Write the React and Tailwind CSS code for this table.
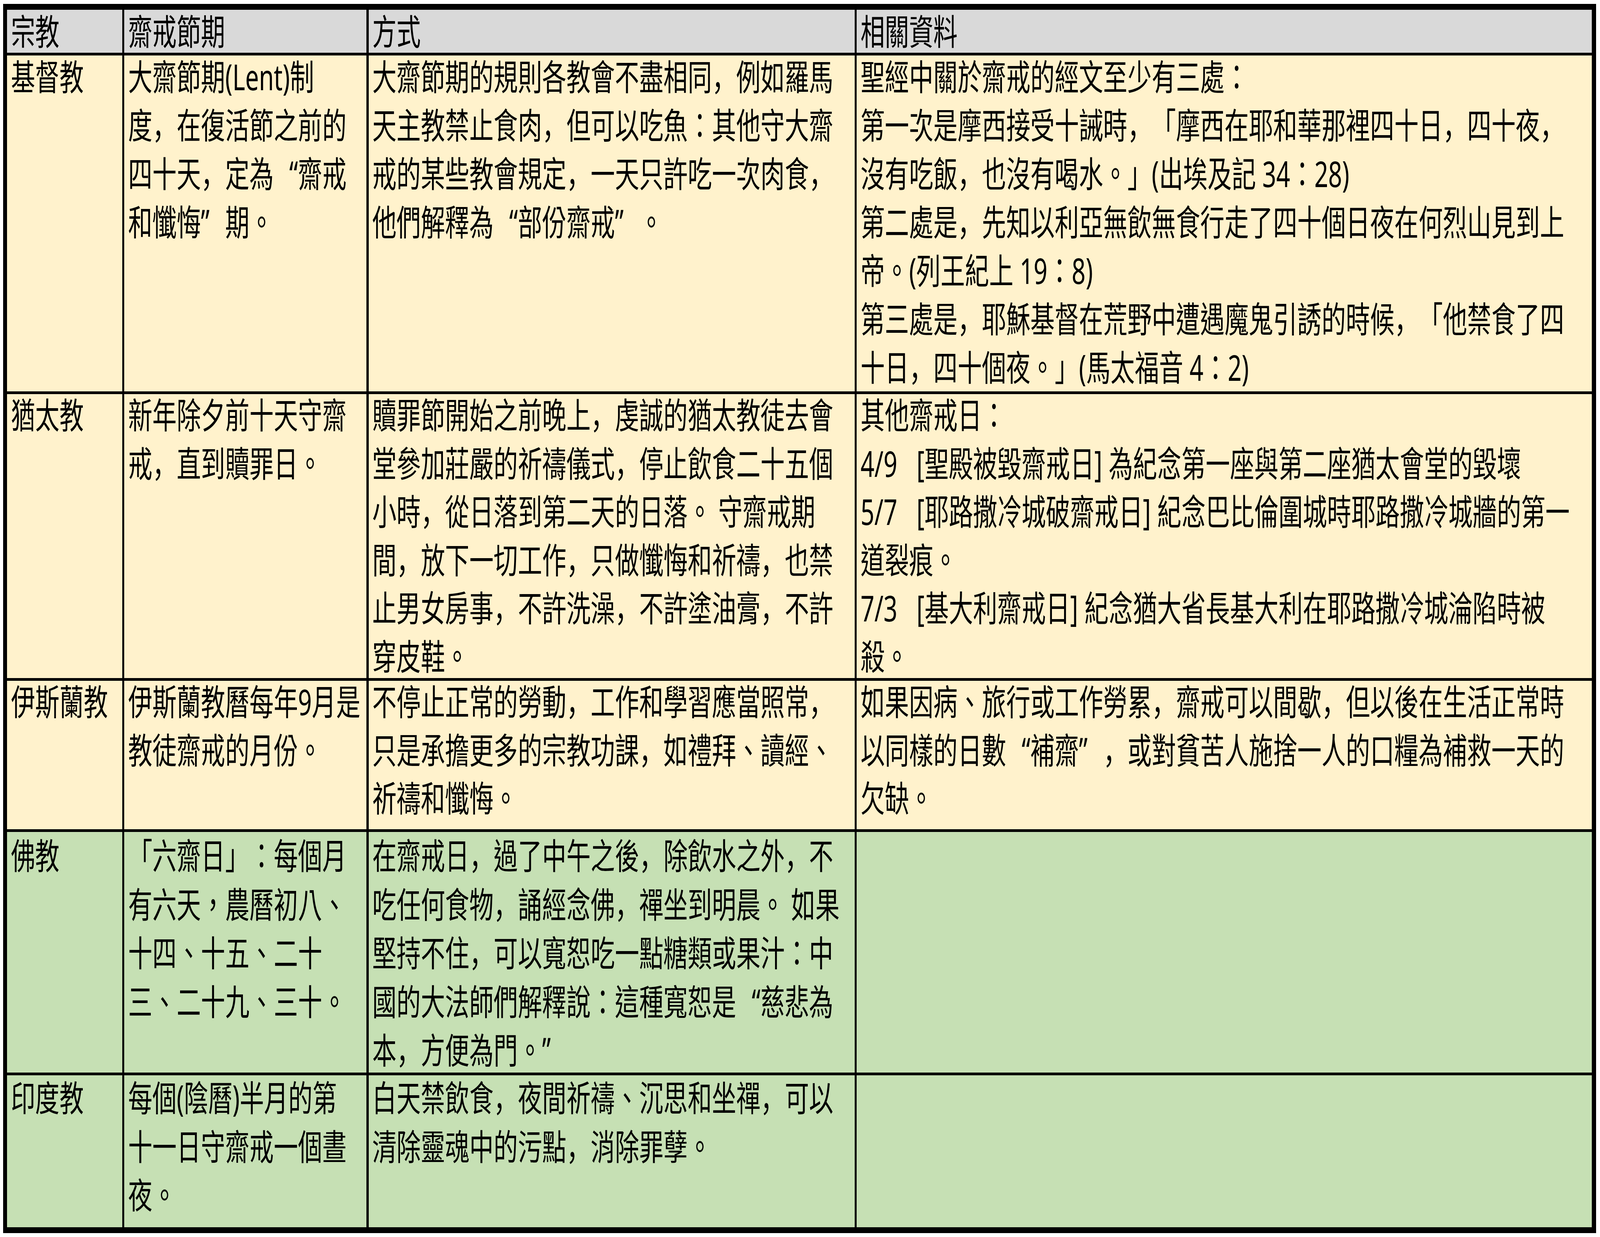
import React from "react";

const LQ = () => <span className="inline-block w-[91px] text-right">“</span>;
const RQ = () => <span className="inline-block w-[91px] text-left">”</span>;
const SC = ({ c }) => <span className="font-['Noto_Sans_CJK_SC',sans-serif] leading-none">{c}</span>;

function renderLine(s) {
  if (typeof s !== "string") return s;
  const parts = s.split(/(“|”|，)/);
  return parts.map((p, i) => {
    if (p === "“") return <LQ key={i} />;
    if (p === "”") return <RQ key={i} />;
    if (p === "，") return <SC key={i} c="，" />;
    return <React.Fragment key={i}>{p}</React.Fragment>;
  });
}

function Line({ children }) {
  return <div className="whitespace-pre origin-left scale-x-[0.68255]">{children}</div>;
}

function Lines({ lines }) {
  return (
    <div className="-mt-[8px]">
      {lines.map((l, i) => {
        if (l && typeof l === "object" && l.d) {
          return (
            <Line key={i}>
              <span className="inline-block w-[210px]">{l.d}</span>
              {renderLine(l.t)}
            </Line>
          );
        }
        return <Line key={i}>{renderLine(l)}</Line>;
      })}
    </div>
  );
}

const rows = [
  {
    cls: "bg-[#fff2cc] leading-[124px]",
    c: [
      ["基督教"],
      ["大齋節期(Lent)制", "度，在復活節之前的", "四十天，定為“齋戒", "和懺悔”期。"],
      [
        "大齋節期的規則各教會不盡相同，例如羅馬",
        "天主教禁止食肉，但可以吃魚：其他守大齋",
        "戒的某些教會規定，一天只許吃一次肉食，",
        "他們解釋為“部份齋戒”。",
      ],
      [
        "聖經中關於齋戒的經文至少有三處：",
        "第一次是摩西接受十誡時，「摩西在耶和華那裡四十日，四十夜，",
        "沒有吃飯，也沒有喝水。」(出埃及記 34：28)",
        "第二處是，先知以利亞無飲無食行走了四十個日夜在何烈山見到上",
        "帝。(列王紀上 19：8)",
        "第三處是，耶穌基督在荒野中遭遇魔鬼引誘的時候，「他禁食了四",
        "十日，四十個夜。」(馬太福音 4：2)",
      ],
    ],
  },
  {
    cls: "bg-[#fff2cc] leading-[123.5px]",
    c: [
      ["猶太教"],
      ["新年除夕前十天守齋", "戒，直到贖罪日。"],
      [
        "贖罪節開始之前晚上，虔誠的猶太教徒去會",
        "堂參加莊嚴的祈禱儀式，停止飲食二十五個",
        "小時，從日落到第二天的日落。 守齋戒期",
        "間，放下一切工作，只做懺悔和祈禱，也禁",
        "止男女房事，不許洗澡，不許塗油膏，不許",
        "穿皮鞋。",
      ],
      [
        "其他齋戒日：",
        { d: "4/9", t: "[聖殿被毀齋戒日] 為紀念第一座與第二座猶太會堂的毀壞" },
        { d: "5/7", t: "[耶路撒冷城破齋戒日] 紀念巴比倫圍城時耶路撒冷城牆的第一" },
        "道裂痕。",
        { d: "7/3", t: "[基大利齋戒日] 紀念猶大省長基大利在耶路撒冷城淪陷時被" },
        "殺。",
      ],
    ],
  },
  {
    cls: "bg-[#fff2cc] leading-[123.5px]",
    c: [
      ["伊斯蘭教"],
      ["伊斯蘭教曆每年9月是", "教徒齋戒的月份。"],
      [
        "不停止正常的勞動，工作和學習應當照常，",
        "只是承擔更多的宗教功課，如禮拜、讀經、",
        "祈禱和懺悔。",
      ],
      [
        "如果因病、旅行或工作勞累，齋戒可以間歇，但以後在生活正常時",
        "以同樣的日數“補齋”，或對貧苦人施捨一人的口糧為補救一天的",
        "欠缺。",
      ],
    ],
  },
  {
    cls: "bg-[#c6e0b4] leading-[124.5px] pt-[6px]",
    c: [
      ["佛教"],
      [
        "「六齋日」：每個月",
        <React.Fragment key="x">有六天，農曆初八、</React.Fragment>,
        "十四、十五、二十",
        "三、二十九、三十。",
      ],
      [
        "在齋戒日，過了中午之後，除飲水之外，不",
        "吃任何食物，誦經念佛，禪坐到明晨。 如果",
        "堅持不住，可以寬恕吃一點糖類或果汁：中",
        "國的大法師們解釋說：這種寬恕是“慈悲為",
        "本，方便為門。”",
      ],
      [],
    ],
  },
  {
    cls: "bg-[#c6e0b4] leading-[124.5px] pt-[3px]",
    c: [
      ["印度教"],
      ["每個(陰曆)半月的第", "十一日守齋戒一個晝", "夜。"],
      ["白天禁飲食，夜間祈禱、沉思和坐禪，可以", "清除靈魂中的污點，消除罪孽。"],
      [],
    ],
  },
];

const headers = ["宗教", "齋戒節期", "方式", "相關資料"];

export default function App() {
  return (
    <div className="bg-white w-full h-[3167px] overflow-hidden pt-[10px] pl-[0.2vw] font-['Noto_Sans','Noto_Sans_CJK_TC',sans-serif] text-black [text-spacing-trim:space-all]">
      <div className="w-max bg-black py-[15px] px-[0.25vw] grid grid-cols-[7.1821vw_15.1475vw_30.3616vw_45.959vw] grid-rows-[110px_860px_727px_380px_616px_389px] gap-x-[0.1333vw] gap-y-[7px]">
        {headers.map((h) => (
          <div key={h} className="bg-[#d9d9d9] px-[0.2333vw] text-[91px] leading-[110px]">
            <Line>{h}</Line>
          </div>
        ))}
        {rows.map((r, ri) =>
          r.c.map((cell, ci) => (
            <div key={ri + "-" + ci} className={r.cls + " px-[0.2333vw] text-[91px]"}>
              <Lines lines={cell} />
            </div>
          ))
        )}
      </div>
    </div>
  );
}
